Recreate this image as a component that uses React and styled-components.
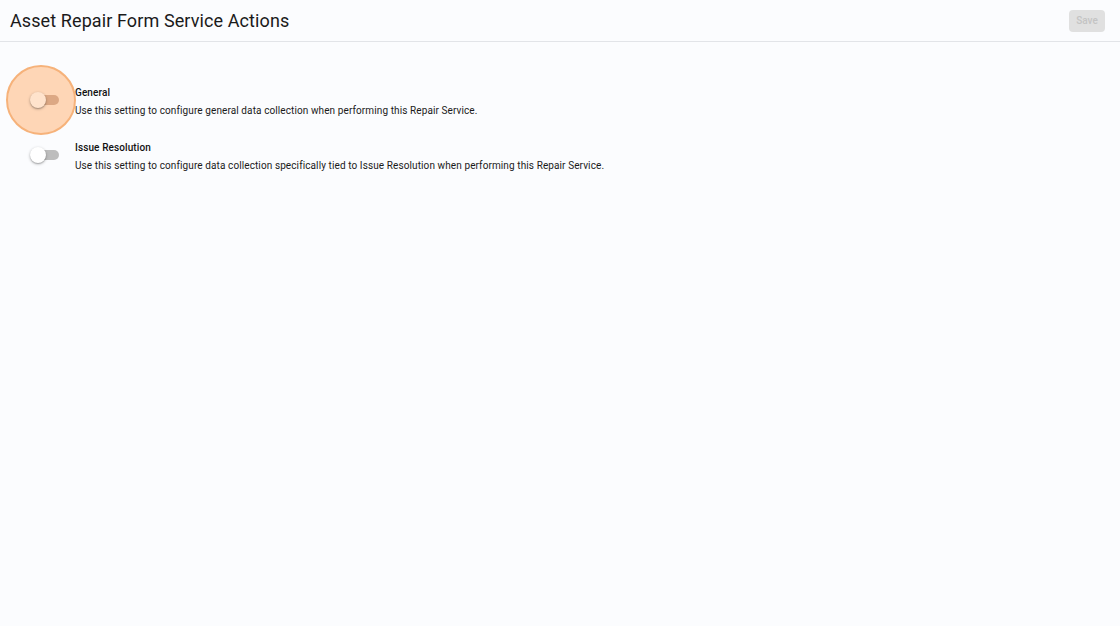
import React from "react";
import styled, { createGlobalStyle } from "styled-components";

const Global = createGlobalStyle`
  html, body { margin: 0; padding: 0; background: #fbfcfe; }
  body { font-family: Roboto, "Liberation Sans", sans-serif; color: #111; }
`;

const Page = styled.div`
  width: 1120px;
  height: 626px;
  background: #fbfcfe;
`;

const Header = styled.header`
  height: 42px;
  box-sizing: border-box;
  border-bottom: 1px solid #e2e4e8;
  display: flex;
  align-items: center;
  justify-content: space-between;
  padding: 0 15px 0 10px;
`;

const Title = styled.h1`
  margin: 0;
  font-size: 18px;
  font-weight: 400;
  letter-spacing: 0.1px;
  color: #1a1a1a;
`;

const SaveButton = styled.button`
  width: 36px;
  height: 22px;
  border: none;
  border-radius: 4px;
  background: #e0e0e0;
  color: #c4c4c4;
  font-family: Roboto, sans-serif;
  font-size: 10px;
  font-weight: 500;
  padding: 0;
`;

const Settings = styled.div`
  display: flex;
  flex-direction: column;
  gap: 19px;
  padding: 44px 0 0 0;
`;

const Row = styled.div`
  display: flex;
  align-items: flex-start;
`;

const SwitchCell = styled.div`
  width: 75px;
  height: 36px;
  position: relative;
  flex-shrink: 0;
`;

const Ripple = styled.span`
  position: absolute;
  left: 6px;
  top: -21px;
  width: 66px;
  height: 66px;
  border-radius: 50%;
  background: #fed6b6;
  border: 2px solid #f6b27a;
`;

const Track = styled.span`
  position: absolute;
  left: 31px;
  top: 9px;
  width: 28px;
  height: 10px;
  border-radius: 5px;
  background: ${(p) => (p.$active ? "#dca884" : "#bdbdbd")};
`;

const Thumb = styled.span`
  position: absolute;
  left: 30px;
  top: 6px;
  width: 16px;
  height: 16px;
  border-radius: 50%;
  background: ${(p) => (p.$active ? "#ffe3cc" : "#fff")};
  box-shadow: 0 1px 3px rgba(0, 0, 0, 0.3), 0 1px 1px rgba(0, 0, 0, 0.14);
`;

const TextCol = styled.div`
  display: flex;
  flex-direction: column;
  gap: 5px;
`;

const Label = styled.div`
  font-size: 10px;
  font-weight: 500;
  line-height: 13px;
  letter-spacing: 0.1px;
  color: #111;
`;

const Desc = styled.div`
  font-size: 10px;
  line-height: 13px;
  letter-spacing: 0.1px;
  color: #1a1a1a;
`;

const settings = [
  {
    label: "General",
    desc: "Use this setting to configure general data collection when performing this Repair Service.",
    active: true,
  },
  {
    label: "Issue Resolution",
    desc: "Use this setting to configure data collection specifically tied to Issue Resolution when performing this Repair Service.",
    active: false,
  },
];

export default function App() {
  return (
    <Page>
      <Global />
      <Header>
        <Title>Asset Repair Form Service Actions</Title>
        <SaveButton disabled>Save</SaveButton>
      </Header>
      <Settings>
        {settings.map((s) => (
          <Row key={s.label}>
            <SwitchCell>
              {s.active && <Ripple />}
              <Track $active={s.active} />
              <Thumb $active={s.active} />
            </SwitchCell>
            <TextCol>
              <Label>{s.label}</Label>
              <Desc>{s.desc}</Desc>
            </TextCol>
          </Row>
        ))}
      </Settings>
    </Page>
  );
}
